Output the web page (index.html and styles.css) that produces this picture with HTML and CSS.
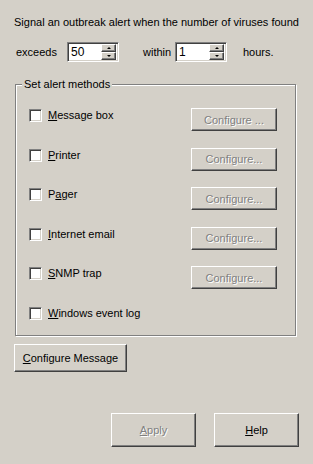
FILE: index.html
```html
<!DOCTYPE html>
<html lang="en">
<head>
    <meta charset="UTF-8">
    <title>Outbreak Alert</title>
    <link rel="stylesheet" href="styles.css">
</head>
<body>
    <div class="dialog">
        <p class="intro">Signal an outbreak alert when the number of viruses found</p>

        <div class="limits">
            <span class="lbl-exceeds">exceeds</span>
            <div class="spinner">
                <span class="spin-value">50</span>
                <div class="spin-btns">
                    <span class="spin-btn"><i class="arrow-up"></i></span>
                    <span class="spin-btn"><i class="arrow-down"></i></span>
                </div>
            </div>
            <span class="lbl-within">within</span>
            <div class="spinner">
                <span class="spin-value">1</span>
                <div class="spin-btns">
                    <span class="spin-btn"><i class="arrow-up"></i></span>
                    <span class="spin-btn"><i class="arrow-down"></i></span>
                </div>
            </div>
            <span class="lbl-hours">hours.</span>
        </div>

        <fieldset class="group">
            <legend>Set alert methods</legend>
            <div class="method">
                <label class="check"><span class="box"></span><span><u>M</u>essage box</span></label>
                <button class="btn btn-config" disabled>Configure ...</button>
            </div>
            <div class="method">
                <label class="check"><span class="box"></span><span><u>P</u>rinter</span></label>
                <button class="btn btn-config" disabled>Configure...</button>
            </div>
            <div class="method">
                <label class="check"><span class="box"></span><span>P<u>a</u>ger</span></label>
                <button class="btn btn-config" disabled>Configure...</button>
            </div>
            <div class="method">
                <label class="check"><span class="box"></span><span><u>I</u>nternet email</span></label>
                <button class="btn btn-config" disabled>Configure...</button>
            </div>
            <div class="method">
                <label class="check"><span class="box"></span><span><u>S</u>NMP trap</span></label>
                <button class="btn btn-config" disabled>Configure...</button>
            </div>
            <div class="method">
                <label class="check"><span class="box"></span><span><u>W</u>indows event log</span></label>
            </div>
        </fieldset>

        <button class="btn btn-message"><u>C</u>onfigure Message</button>

        <div class="footer">
            <button class="btn btn-footer" disabled><u>A</u>pply</button>
            <button class="btn btn-footer"><u>H</u>elp</button>
        </div>
    </div>
</body>
</html>
```

FILE: styles.css
```css
body {
    margin: 0;
    background-color: #d4d0c8;
    font-family: "Liberation Sans", Arial, sans-serif;
    font-size: 11px;
    line-height: 13px;
    color: #000;
}

.dialog {
    width: 313px;
    height: 464px;
    overflow: hidden;
}

.intro {
    margin: 0;
    padding: 16px 0 0 14px;
}

.limits {
    display: flex;
    align-items: center;
    margin-top: 13px;
    padding-left: 16px;
    height: 20px;
}

.lbl-exceeds {
    width: 51px;
}

.lbl-within {
    margin-left: 24px;
    width: 32px;
}

.lbl-hours {
    margin-left: 16px;
}

.spinner {
    box-sizing: border-box;
    width: 52px;
    height: 20px;
    display: flex;
    align-items: center;
    justify-content: space-between;
    background: #fff;
    border: 1px solid;
    border-color: #808080 #fff #fff #808080;
    box-shadow: inset 1px 1px 0 #404040, inset -1px -1px 0 #d4d0c8;
    padding: 0 2px 0 3px;
    font-size: 12px;
}

.spin-btns {
    display: flex;
    flex-direction: column;
}

.spin-btn {
    box-sizing: border-box;
    width: 15px;
    height: 8px;
    display: flex;
    align-items: center;
    justify-content: center;
    background: #d4d0c8;
    border: 1px solid;
    border-color: #fff #404040 #404040 #fff;
    box-shadow: inset -1px -1px 0 #808080;
}

.arrow-up,
.arrow-down {
    width: 0;
    height: 0;
    border-left: 2px solid transparent;
    border-right: 2px solid transparent;
}

.arrow-up {
    border-bottom: 2px solid #000;
}

.arrow-down {
    border-top: 2px solid #000;
}

.group {
    box-sizing: border-box;
    width: 281px;
    margin: 16px 0 0 15px;
    padding: 17px 18px 6px 13px;
    border: 1px solid #808080;
    box-shadow: inset 1px 1px 0 #fff, 1px 1px 0 #fff;
    display: flex;
    flex-direction: column;
    gap: 16.6px;
}

.group legend {
    margin-left: -7px;
    padding: 0 2px;
    background: #d4d0c8;
}

.method {
    display: flex;
    justify-content: space-between;
    align-items: flex-start;
    min-height: 23px;
}

.check {
    display: flex;
    align-items: center;
    gap: 6px;
    margin-top: 1px;
}

.box {
    box-sizing: border-box;
    width: 13px;
    height: 13px;
    background: #fff;
    border: 1px solid;
    border-color: #808080 #fff #fff #808080;
    box-shadow: inset 1px 1px 0 #404040, inset -1px -1px 0 #d4d0c8;
}

.btn {
    box-sizing: border-box;
    background: #d4d0c8;
    border: 1px solid;
    border-color: #fff #404040 #404040 #fff;
    box-shadow: inset -1px -1px 0 #808080;
    font-family: inherit;
    font-size: 11px;
    color: #000;
    padding: 0;
    border-radius: 0;
}

.btn:disabled {
    color: #808080;
    text-shadow: 1px 1px 0 #fff;
}

.btn-config {
    width: 86px;
    height: 23px;
}

.btn-message {
    display: block;
    width: 113px;
    height: 28px;
    margin: 8px 0 0 14px;
}

.footer {
    display: flex;
    justify-content: flex-end;
    gap: 18px;
    padding-right: 14px;
    margin-top: 41px;
}

.btn-footer {
    width: 85px;
    height: 34px;
}
```
